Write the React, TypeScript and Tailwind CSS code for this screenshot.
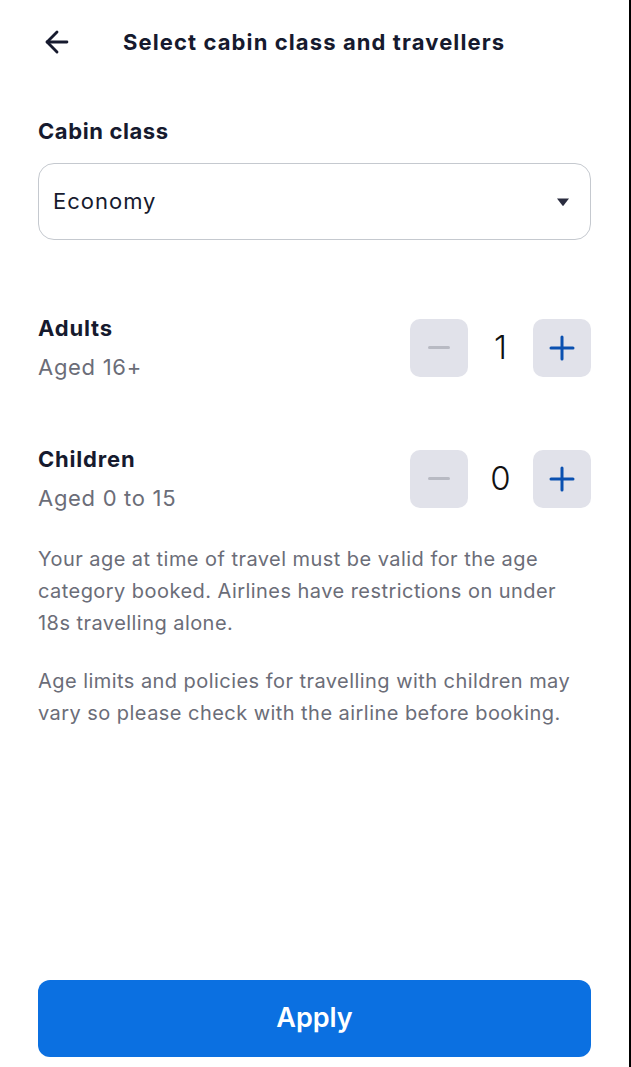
import { ArrowLeft } from "lucide-react";

const font = { fontFamily: "Inter, 'Noto Sans', sans-serif" };

function Stepper({ value }: { value: number }) {
  return (
    <div className="flex items-center">
      <button className="flex h-[58px] w-[58px] items-center justify-center rounded-[10px] bg-[#e1e2ea]">
        <span className="block h-[3px] w-[22px] rounded-full bg-[#b8bac3]" />
      </button>
      <span className="w-[65px] text-center text-[33px] font-light leading-none text-[#111111]">{value}</span>
      <button className="flex h-[58px] w-[58px] items-center justify-center rounded-[10px] bg-[#e1e2ea]">
        <svg width="26" height="26" viewBox="0 0 26 26" aria-hidden="true">
          <path d="M13 2v22M2 13h22" stroke="#0a50b0" strokeWidth="3" strokeLinecap="round" />
        </svg>
      </button>
    </div>
  );
}

function TravellerRow({ title, sub, value }: { title: string; sub: string; value: number }) {
  return (
    <div className="flex items-center justify-between">
      <div>
        <div className="text-[22px] font-bold leading-[28px] tracking-[0.8px] text-[#161a2e]">{title}</div>
        <div className="mt-[11px] text-[22px] leading-[28px] tracking-[0.7px] text-[#6b6d78]">{sub}</div>
      </div>
      <Stepper value={value} />
    </div>
  );
}

export default function App() {
  return (
    <div className="flex h-[1067px] w-[631px] bg-white" style={font}>
      <div className="flex flex-1 flex-col px-[38px]">
        <header className="flex h-[82px] items-center pt-[2px]">
          <ArrowLeft className="ml-[2px] h-[34px] w-[34px] text-[#161a2e]" strokeWidth={2} />
          <h1 className="ml-[49px] text-[22px] font-bold tracking-[1.1px] text-[#161a2e]">
            Select cabin class and travellers
          </h1>
        </header>

        <h2 className="mt-[35px] text-[22px] font-bold leading-[28px] tracking-[0.6px] text-[#161a2e]">Cabin class</h2>
        <div className="mt-[18px] flex h-[77px] items-center justify-between rounded-[16px] border border-[#c5c9cf] pl-[14px] pr-[20px]">
          <span className="text-[22px] tracking-[1px] text-[#161a2e]">Economy</span>
          <svg width="14" height="10" viewBox="0 0 14 10" aria-hidden="true">
            <path d="M1 1.5h12L7.6 8.6a.8.8 0 0 1-1.2 0z" fill="#2a2c3f" />
          </svg>
        </div>

        <div className="mt-[74px]">
          <TravellerRow title="Adults" sub="Aged 16+" value={1} />
        </div>
        <div className="mt-[64px]">
          <TravellerRow title="Children" sub="Aged 0 to 15" value={0} />
        </div>

        <div className="mt-[31px] space-y-[26px] text-[20px] leading-[32px] tracking-[0.45px] text-[#6b6d78]">
          <p>
            Your age at time of travel must be valid for the age category booked. Airlines have restrictions on
            under 18s travelling alone.
          </p>
          <p>
            Age limits and policies for travelling with children may vary so please check with the airline before
            booking.
          </p>
        </div>

        <div className="mt-auto pb-[10px]">
          <button className="flex h-[77px] w-full items-center justify-center rounded-[12px] bg-[#0b70e1] text-[27px] font-semibold text-white">
            Apply
          </button>
        </div>
      </div>
      <div className="w-[2px] bg-black" />
    </div>
  );
}
